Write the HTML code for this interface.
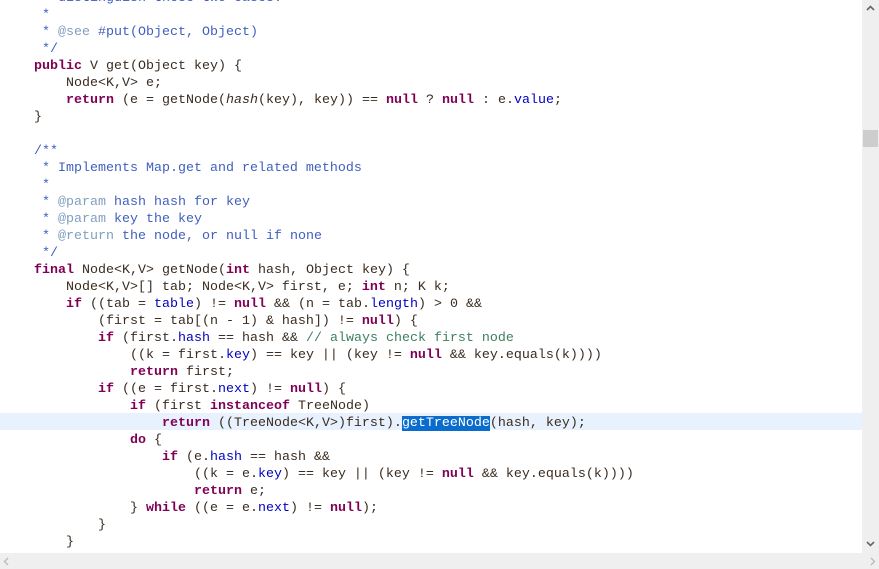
<!DOCTYPE html>
<html><head><style>
html,body{margin:0;padding:0;width:879px;height:569px;overflow:hidden;background:#fff}
#ed{position:absolute;left:0;top:0;width:862px;height:553px;overflow:hidden;background:#fff}
#hl{position:absolute;left:0;top:413px;width:862px;height:17px;background:#e8f2fe}
pre{position:absolute;left:2px;top:-10px;margin:0;font-family:"Liberation Mono",monospace;font-size:13.33px;line-height:17px;color:#3a2c20}
.k{color:#7f0055;font-weight:bold}
.c{color:#3f5fbf}
.t{color:#7f9fbf}
.g{color:#3f7f5f}
.f{color:#0000c0}
.i{font-style:italic}
.s{background:#0a6ccc;color:#fff}
#vs{position:absolute;left:862px;top:0;width:17px;height:553px;background:#efefef}
#th{position:absolute;left:863px;top:130px;width:15px;height:17px;background:#cdcdcd}
#hs{position:absolute;left:0;top:553px;width:879px;height:16px;background:#efefef}
svg{position:absolute}
</style></head><body>
<div id="ed"><div id="hl"></div>
<pre><span class="c">     * distinguish these two cases.</span>
<span class="c">     *</span>
<span class="c">     * </span><span class="t">@see</span><span class="c"> #put(Object, Object)</span>
<span class="c">     */</span>
    <span class="k">public</span> V get(Object key) {
        Node&lt;K,V&gt; e;
        <span class="k">return</span> (e = getNode(<span class="i">hash</span>(key), key)) == <span class="k">null</span> ? <span class="k">null</span> : e.<span class="f">value</span>;
    }

<span class="c">    /**</span>
<span class="c">     * Implements Map.get and related methods</span>
<span class="c">     *</span>
<span class="c">     * </span><span class="t">@param</span><span class="c"> hash hash for key</span>
<span class="c">     * </span><span class="t">@param</span><span class="c"> key the key</span>
<span class="c">     * </span><span class="t">@return</span><span class="c"> the node, or null if none</span>
<span class="c">     */</span>
    <span class="k">final</span> Node&lt;K,V&gt; getNode(<span class="k">int</span> hash, Object key) {
        Node&lt;K,V&gt;[] tab; Node&lt;K,V&gt; first, e; <span class="k">int</span> n; K k;
        <span class="k">if</span> ((tab = <span class="f">table</span>) != <span class="k">null</span> &amp;&amp; (n = tab.<span class="f">length</span>) &gt; 0 &amp;&amp;
            (first = tab[(n - 1) &amp; hash]) != <span class="k">null</span>) {
            <span class="k">if</span> (first.<span class="f">hash</span> == hash &amp;&amp; <span class="g">// always check first node</span>
                ((k = first.<span class="f">key</span>) == key || (key != <span class="k">null</span> &amp;&amp; key.equals(k))))
                <span class="k">return</span> first;
            <span class="k">if</span> ((e = first.<span class="f">next</span>) != <span class="k">null</span>) {
                <span class="k">if</span> (first <span class="k">instanceof</span> TreeNode)
                    <span class="k">return</span> ((TreeNode&lt;K,V&gt;)first).<span class="s">getTreeNode</span>(hash, key);
                <span class="k">do</span> {
                    <span class="k">if</span> (e.<span class="f">hash</span> == hash &amp;&amp;
                        ((k = e.<span class="f">key</span>) == key || (key != <span class="k">null</span> &amp;&amp; key.equals(k))))
                        <span class="k">return</span> e;
                } <span class="k">while</span> ((e = e.<span class="f">next</span>) != <span class="k">null</span>);
            }
        }
</pre></div>
<div id="vs"></div><div id="th"></div>
<svg style="left:866px;top:5px" width="9" height="6"><path d="M1 5 L4.5 1.5 L8 5" stroke="#666" stroke-width="1.6" fill="none"/></svg>
<svg style="left:866px;top:541px" width="9" height="6"><path d="M1 1 L4.5 4.5 L8 1" stroke="#666" stroke-width="1.6" fill="none"/></svg>
<div id="hs"></div>
<svg style="left:3px;top:557px" width="6" height="9"><path d="M5 1 L1.5 4.5 L5 8" stroke="#bbb" stroke-width="1.4" fill="none"/></svg>
<svg style="left:506px;top:557px;left:870px" width="6" height="9"><path d="M1 1 L4.5 4.5 L1 8" stroke="#bbb" stroke-width="1.4" fill="none"/></svg>
</body></html>
